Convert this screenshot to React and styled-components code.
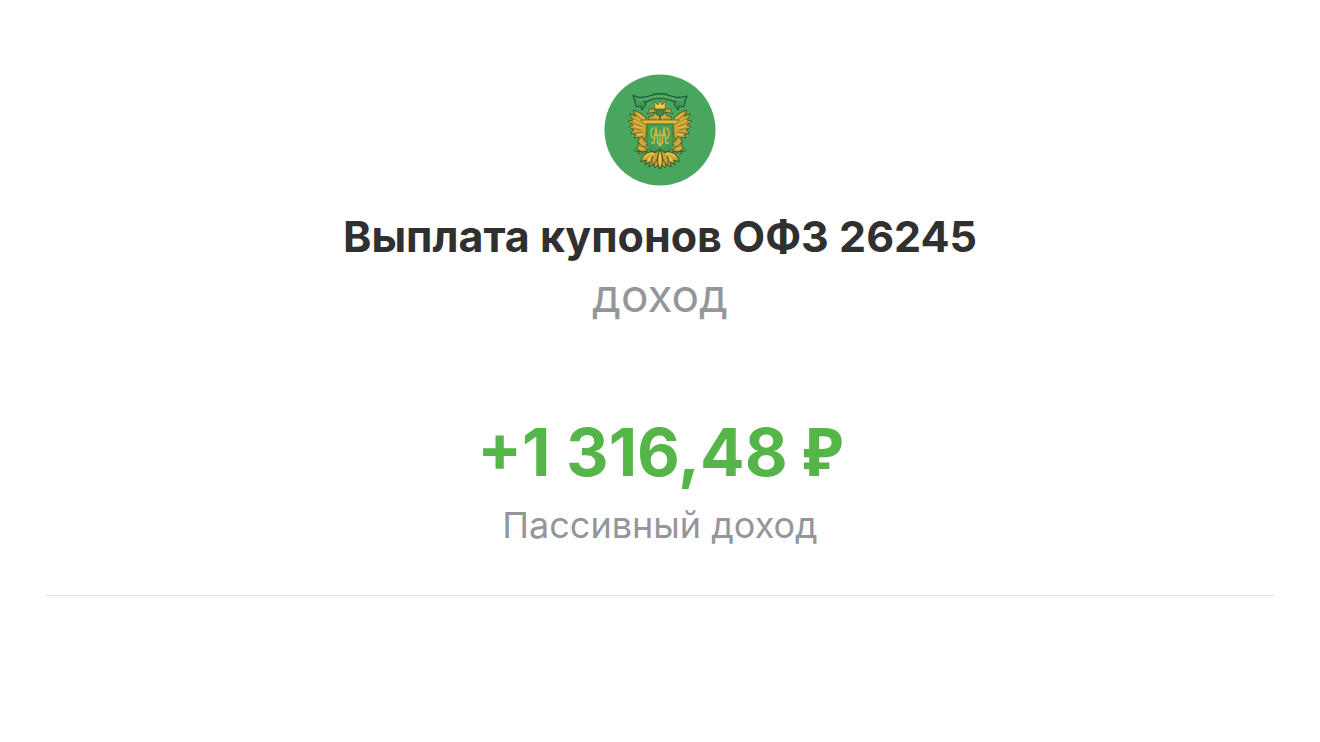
import React from "react";
import styled, { createGlobalStyle } from "styled-components";

const GlobalStyle = createGlobalStyle`
  body {
    margin: 0;
    background: #ffffff;
    font-family: Inter, "Liberation Sans", sans-serif;
  }
`;

const Page = styled.main`
  display: flex;
  flex-direction: column;
  padding: 74px 45px 0;
  text-align: center;
`;

const Emblem = styled.svg`
  width: 112px;
  height: 112px;
  align-self: center;
`;

const Title = styled.h1`
  margin: 24px 0 0;
  font-size: 43px;
  line-height: 52px;
  font-weight: 700;
  color: #303030;
`;

const Kind = styled.p`
  margin: 7px 0 0;
  font-size: 46px;
  line-height: 52px;
  color: #94969a;
`;

const Amount = styled.p`
  margin: 93px 0 0;
  font-size: 66px;
  line-height: 76px;
  font-weight: 700;
  color: #56b548;
`;

const Currency = styled.span`
  font-family: "Noto Sans", "Liberation Sans", sans-serif;
  line-height: 1;
`;

const Category = styled.p`
  margin: 11px 0 0;
  font-size: 36px;
  line-height: 48px;
  color: #94969a;
`;

const Divider = styled.hr`
  width: 100%;
  margin: 46px 0 0;
  border: 0;
  border-top: 1px solid #e0e0e0;
`;

const Wing = () => (
  <g stroke="#3b5020" strokeWidth="0.8" strokeLinejoin="round">
    <path fill="#d2a636" d="M47 51C45 46 42 44 38 42L33 40L36 46L29 44L33 50L28 51L33 55L29 57L34 60L30 63L36 64L34 68L39 67L41 71L46 67Z" />
    <path fill="none" stroke="#80702a" d="M33 43L43 50M31 47L42 54M31 52L42 57M32 58L41 60M35 63L43 62" />
    <path fill="none" stroke="#f1cf55" d="M37 43L44 49M34 50L43 55M34 56L42 58M37 65L43 64" />
    <path fill="#c89b32" d="M42 66L38 70L39 75L36 78L40 81L38 84L44 82L48 80L45 77L48 73L44 70Z" />
    <path fill="none" stroke="#f1cf55" d="M42 69L41 74L45 74M39 78L43 79L46 77" />
    <path fill="none" stroke="#3b5020" d="M34 81L48 82M39 73L46 79" />
    <path fill="#d9ad3c" d="M57 52L50 51L48 47L53 46L55 43L52 42L47 44L50 39L54 39L58 43L60 48Z" />
    <path fill="none" stroke="#775d24" d="M50 49L57 49M54 40L56 44" />
  </g>
);

const TreasuryEmblem = () => (
  <Emblem viewBox="4 4 112 112" role="img" aria-label="Эмблема Минфина">
    <circle cx="60" cy="60" r="55.5" fill="#49a65e" />
    <Wing />
    <g transform="translate(120 0) scale(-1 1)"><Wing /></g>
    <g fill="#3f9a58" stroke="#175a3a" strokeWidth="1.1" strokeLinejoin="round">
      <path d="M33 25C39 29 44 27 49 26C56 23 64 23 71 26C77 28 81 28 87 26L85 32C78 34 74 31 69 30C63 28 57 28 51 30C46 32 42 34 35 32Z" />
      <path d="M35 32L36 37L41 36L42 40L46 34L44 31M85 32L84 37L79 36L78 40L74 34L76 31" />
    </g>
    <path d="M37 30C45 31 49 27 57 26H63C71 27 75 31 83 30" fill="none" stroke="#94ba79" strokeWidth="1" strokeDasharray="2 1" />
    <path d="M55 39L54 31L58 35L60 30L62 35L66 31L65 39Z" fill="#f2cc43" stroke="#665b25" strokeWidth=".8" />
    <path d="M56 40H64V44L60 47L56 44Z" fill="#398a4d" stroke="#28633c" strokeWidth=".8" />
    <path d="M41 50H79L76 54H44Z" fill="#e6bb3d" stroke="#59602a" strokeWidth=".7" />
    <path d="M47 54H73V75C69 79 64 79 60 81C56 79 51 79 47 75Z" fill="#42a059" stroke="#5d7a2c" strokeWidth="1" />
    <g fill="none" stroke="#d8b743" strokeWidth="1.3">
      <path d="M54 58C50 58 50 68 54 68M66 58C70 58 70 68 66 68" />
      <path d="M51 73H54L56 57L58 73M69 73H66L64 57L62 73M60 60V75M57 72L60 76L63 72M54 65H66" />
    </g>
    <g fill="#cba032" stroke="#35512b" strokeWidth="1" strokeLinejoin="round">
      <path d="M57 82C48 80 41 85 41 92L46 90L45 95L50 91L49 97L54 94L55 98L58 95L60 99L62 95L65 98L66 94L71 97L70 91L75 95L74 90L79 92C79 85 72 80 63 82L60 79Z" />
      <path d="M57 81C51 84 51 92 53 95C57 92 58 86 60 80C62 86 63 92 67 95C69 92 69 84 63 81" />
      <path d="M60 80C57 86 57 94 60 99C63 94 63 86 60 80Z" fill="#f0c84a" />
    </g>
    <path d="M45 88C46 84 51 83 55 83M75 88C74 84 69 83 65 83M49 92C48 87 53 84 56 83M71 92C72 87 67 84 64 83" fill="none" stroke="#f3d057" strokeWidth="1.2" />
    <path d="M49 79L55 83L60 79L65 83L71 79M60 77V82" fill="none" stroke="#2b6d41" strokeWidth="1.3" />
  </Emblem>
);

export default function App() {
  return (
    <>
      <GlobalStyle />
      <Page>
        <TreasuryEmblem />
        <Title>Выплата купонов ОФЗ 26245</Title>
        <Kind>доход</Kind>
        <Amount>+1 316,48 <Currency>₽</Currency></Amount>
        <Category>Пассивный доход</Category>
        <Divider />
      </Page>
    </>
  );
}
